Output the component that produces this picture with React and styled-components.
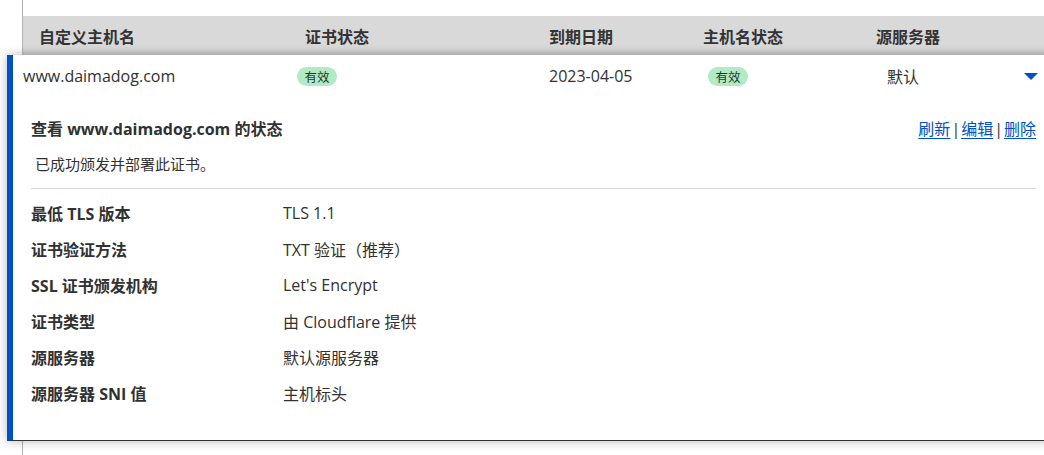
import React from 'react'
import styled, { createGlobalStyle } from 'styled-components';

const GlobalStyle = createGlobalStyle`
  body {
    margin: 0;
    background: #fff;
    overflow: hidden;
    font-family: "Open Sans", "Noto Sans CJK SC", sans-serif;
    color: #313131;
  }
`;

const Table = styled.div`
  margin-left: 22px;
  padding-top: 16px;
  border-left: 1px solid #b3b3b3;
  height: 455px;
  box-sizing: border-box;
`;

const Head = styled.div`
  display: grid;
  grid-template-columns: 266px 244px 154px 173px 1fr;
  align-items: center;
  height: 39px;
  padding-left: 16px;
  background: linear-gradient(#d9d9d9 0, #d9d9d9 32px, #c9c9c9 39px);
`;

const HeadCell = styled.div`
  font-size: 16px;
  font-weight: bold;
  color: #333;
`;

const Card = styled.div`
  position: relative;
  margin-left: -16px;
  width: 1047px;
  height: 386px;
  box-sizing: border-box;
  background: #fff;
  border-left: 6px solid #0051c3;
  border-bottom: 1px solid #333;
  box-shadow: 0 0 10px rgba(0, 0, 0, 0.28);
`;

const Row = styled.div`
  display: grid;
  grid-template-columns: 274px 252px 159px 179px 1fr 30px;
  align-items: center;
  height: 42px;
  padding-left: 10px;
  font-size: 16px;
`;

const Badge = styled.span`
  justify-self: start;
  display: inline-flex;
  align-items: center;
  justify-content: center;
  width: 40px;
  height: 19px;
  border-radius: 10px;
  background: #b1eac5;
  color: #1e3a2a;
  font-size: 12.5px;
`;

const Caret = styled.span`
  width: 0;
  height: 0;
  border-left: 7px solid transparent;
  border-right: 7px solid transparent;
  border-top: 7px solid #0051c3;
`;

const Details = styled.div`
  padding: 22px 18px 30px 18px;
`;

const TitleBar = styled.div`
  display: flex;
  justify-content: space-between;
  align-items: center;
  line-height: 20px;
`;

const Title = styled.div`
  font-size: 16px;
  font-weight: bold;
`;

const Actions = styled.div`
  font-size: 16px;
  color: #333;
  a {
    color: #0051c3;
    text-decoration: underline;
    text-underline-offset: 3px;
    cursor: pointer;
  }
`;

const Sep = styled.span`
  margin: 0 1px;
`;

const Note = styled.div`
  margin-top: 15px;
  padding-left: 4px;
  font-size: 15px;
  line-height: 20px;
`;

const Divider = styled.hr`
  margin: 14px 0 6px;
  border: 0;
  border-top: 1px solid #d9d9d9;
`;

const Field = styled.div`
  display: grid;
  grid-template-columns: 252px 1fr;
  height: 36px;
  align-items: center;
  font-size: 16px;
`;

const Label = styled.div`
  font-weight: bold;
`;

const fields = [
  ['最低 TLS 版本', 'TLS 1.1'],
  ['证书验证方法', 'TXT 验证（推荐）'],
  ['SSL 证书颁发机构', "Let's Encrypt"],
  ['证书类型', '由 Cloudflare 提供'],
  ['源服务器', '默认源服务器'],
  ['源服务器 SNI 值', '主机标头'],
];

const App = () => {
  return (
    <>
      <GlobalStyle />
      <Table>
        <Head>
          <HeadCell>自定义主机名</HeadCell>
          <HeadCell>证书状态</HeadCell>
          <HeadCell>到期日期</HeadCell>
          <HeadCell>主机名状态</HeadCell>
          <HeadCell>源服务器</HeadCell>
        </Head>
        <Card>
          <Row>
            <span>www.daimadog.com</span>
            <Badge>有效</Badge>
            <span>2023-04-05</span>
            <Badge>有效</Badge>
            <span>默认</span>
            <Caret />
          </Row>
          <Details>
            <TitleBar>
              <Title>查看 www.daimadog.com 的状态</Title>
              <Actions>
                <a>刷新</a><Sep>|</Sep><a>编辑</a><Sep>|</Sep><a>删除</a>
              </Actions>
            </TitleBar>
            <Note>已成功颁发并部署此证书。</Note>
            <Divider />
            {fields.map(([k, v]) => (
              <Field key={k}>
                <Label>{k}</Label>
                <span>{v}</span>
              </Field>
            ))}
          </Details>
        </Card>
      </Table>
    </>
  )
}

export default App
